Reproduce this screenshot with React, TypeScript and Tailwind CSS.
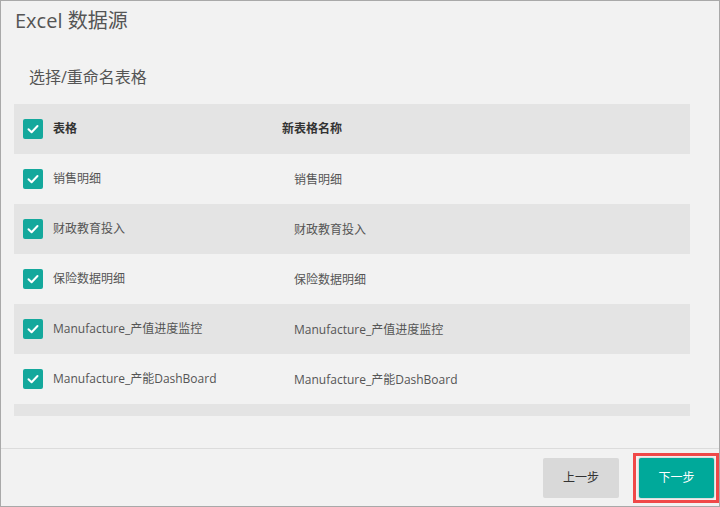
import React from "react";

const rows = [
  "销售明细",
  "财政教育投入",
  "保险数据明细",
  "Manufacture_产值进度监控",
  "Manufacture_产能DashBoard",
  "",
];

function Check() {
  return (
    <div className="w-[20px] h-[20px] rounded-[2px] bg-[#14a89c] flex items-center justify-center shrink-0">
      <svg width="14" height="14" viewBox="0 0 14 14" fill="none">
        <path d="M2.5 7.2 L5.6 10.2 L11.5 4" stroke="white" strokeWidth="2" strokeLinecap="round" strokeLinejoin="round" />
      </svg>
    </div>
  );
}

export default function App() {
  return (
    <div
      className="w-[720px] h-[507px] border border-[#a9a9a9] bg-[#f2f2f2] flex flex-col text-[#444]"
      style={{ fontFamily: '"Open Sans", "Noto Sans CJK SC", sans-serif' }}
    >
      <div className="flex-1 flex flex-col min-h-0">
        <div className="pl-[14px] pt-[5px] h-[30px] text-[20px] leading-[30px] text-[#555]">Excel 数据源</div>
        <div className="pl-[28px] mt-[35px] text-[16px] leading-[22px] text-[#555]">选择/重命名表格</div>
        <div className="ml-[13px] mr-[29px] mt-[16px] h-[312px] overflow-hidden">
          <div className="h-[50px] bg-[#e4e4e4] flex items-center text-[12px] font-semibold text-[#333]">
            <div className="w-[268px] flex items-center pl-[9px]">
              <Check />
              <span className="ml-[10px]">表格</span>
            </div>
            <span>新表格名称</span>
          </div>
          {rows.map((r, i) => (
            <div
              key={i}
              className={`h-[50px] flex items-center text-[12px] text-[#555] ${i % 2 === 1 ? "bg-[#e4e4e4]" : "bg-[#f2f2f2]"}`}
            >
              {r && (
                <>
                  <div className="w-[268px] flex items-center pl-[9px]">
                    <Check />
                    <span className="ml-[10px]">{r}</span>
                  </div>
                  <span className="pl-[12px] pt-[2px]">{r}</span>
                </>
              )}
            </div>
          ))}
        </div>
      </div>
      <div className="h-[58px] border-t border-[#dcdcdc] flex items-center justify-end pr-[0px] gap-[14px] shrink-0">
        <button className="w-[76px] h-[40px] rounded-[2px] bg-[#d9d9d9] text-[12px] text-[#333]">上一步</button>
        <div className="border-[3px] border-[#f04848] pt-[2px] pb-[2px] pl-[3px] pr-[2px]">
          <button className="block w-[75px] h-[40px] rounded-[2px] bg-[#00a99a] text-[12px] text-white shadow-[0_0_2px_rgba(0,0,0,0.35)]">
            下一步
          </button>
        </div>
      </div>
    </div>
  );
}
